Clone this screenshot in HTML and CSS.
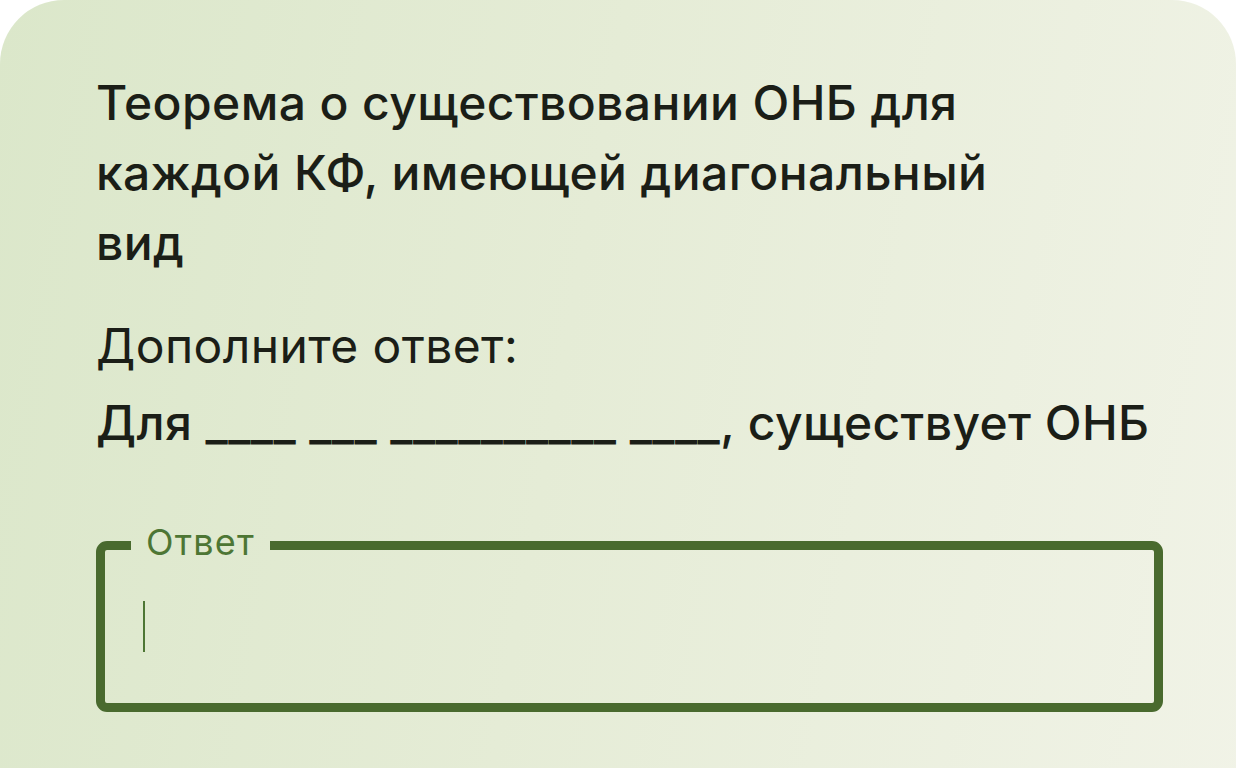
FILE: index.html
```html
<!DOCTYPE html>
<html lang="ru">
<head>
<meta charset="utf-8">
<title>Вопрос</title>
<link rel="stylesheet" href="styles.css">
</head>
<body>
<div class="card">
  <div class="content">
    <h1 class="title">Теорема о существовании ОНБ для каждой КФ, имеющей диагональный вид</h1>
    <p class="prompt">Дополните ответ:</p>
    <p class="blank">Для ____ ___ __________ ____, существует ОНБ</p>
    <fieldset class="field">
      <legend class="field-label">Ответ</legend>
      <div class="field-input"><span class="caret"></span></div>
    </fieldset>
  </div>
</div>
</body>
</html>
```

FILE: styles.css
```css
html, body {
  margin: 0;
  padding: 0;
  background: #ffffff;
}
body {
  width: 1236px;
  height: 768px;
  overflow: hidden;
  font-family: "Inter", "Noto Sans", sans-serif;
  color: #1b1e17;
}
.card {
  min-height: 900px;
  border-radius: 64px 64px 0 0;
  background: linear-gradient(100deg, #dbe7ca 0%, #e5ecd6 45%, #f1f3e7 100%);
}
.content {
  padding: 68px 73px 0 96px;
}
.title {
  margin: 0;
  max-width: 940px;
  font-size: 48px;
  font-weight: 500;
  line-height: 70px;
  letter-spacing: 0.4px;
}
.prompt {
  margin: 33px 0 0;
  font-size: 48px;
  font-weight: 400;
  line-height: 70px;
  letter-spacing: 0.4px;
}
.blank {
  margin: 7px 0 0;
  font-size: 48px;
  font-weight: 500;
  line-height: 70px;
  letter-spacing: 0.4px;
}
.field {
  margin: 66px 0 0;
  padding: 0 26px;
  border: 9px solid #496a2e;
  border-radius: 11px;
  min-width: 0;
}
.field-label {
  padding: 0 15px 6px;
  font-size: 36px;
  letter-spacing: 1.2px;
  line-height: 36px;
  color: #4d7634;
  font-weight: 400;
}
.field-input {
  display: flex;
  align-items: flex-start;
  height: 137px;
  padding-left: 12px;
  box-sizing: border-box;
  padding-top: 35px;
}
.caret {
  display: block;
  width: 2px;
  height: 51px;
  background: #4d7634;
}
```
